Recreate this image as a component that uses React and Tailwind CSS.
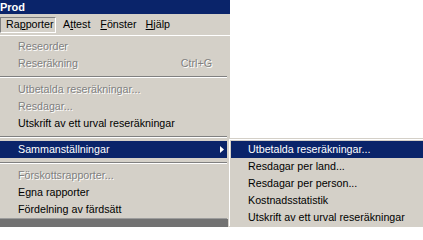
import React from "react";

const mainItems = [
  { label: "Reseorder", disabled: true },
  { label: "Reseräkning", disabled: true, shortcut: "Ctrl+G" },
  { sep: true },
  { label: "Utbetalda reseräkningar...", disabled: true },
  { label: "Resdagar...", disabled: true },
  { label: "Utskrift av ett urval reseräkningar" },
  { sep: true },
  { label: "Sammanställningar", active: true, submenu: true },
  { sep: true },
  { label: "Förskottsrapporter...", disabled: true },
  { label: "Egna rapporter" },
  { label: "Fördelning av färdsätt" },
];

const subItems = [
  { label: "Utbetalda reseräkningar...", active: true },
  { label: "Resdagar per land..." },
  { label: "Resdagar per person..." },
  { label: "Kostnadsstatistik" },
  { label: "Utskrift av ett urval reseräkningar" },
];

function Separator() {
  return (
    <div className="h-[9px] pt-[4px]">
      <div className="h-[2px] border-t border-b border-t-[#808080] border-b-white" />
    </div>
  );
}

function MenuRow({ item, indent }) {
  let cls = "flex h-[17px] items-center justify-between leading-[17px] whitespace-nowrap";
  if (item.active) cls += " bg-[#0a246a] text-white";
  else if (item.disabled) cls += " text-[#808080] [text-shadow:1px_1px_0_#ffffff]";

  return (
    <div className={cls + " " + indent}>
      <span>{item.label}</span>
      {item.shortcut && <span className="pr-[15px]">{item.shortcut}</span>}
      {item.submenu && (
        <svg width="4" height="7" viewBox="0 0 4 7" className="mr-[3px]">
          <polygon points="0,0 4,3.5 0,7" fill="#ffffff" />
        </svg>
      )}
    </div>
  );
}

export default function App() {
  return (
    <div className="relative w-[423px] h-[227px] overflow-hidden bg-white text-black text-[10.7px] font-['Liberation_Sans',Arial,sans-serif]">
      <div className="w-[230px] flex flex-col">
        {/* title bar */}
        <div className="h-[14px] bg-[#0a246a] text-white text-[11px] font-bold leading-[14px] pl-0">
          Prod
        </div>

        {/* menu bar */}
        <div className="h-[21px] bg-[#d4d0c8] flex items-center">
          <div className="h-[16px] w-[56px] flex items-center pl-[5px] border-t border-l border-t-[#808080] border-l-[#808080] border-b border-r border-b-white border-r-white">
            Ra<span className="underline">p</span>porter
          </div>
          <div className="pl-[7px] pr-[5px]">
            A<span className="underline">t</span>test
          </div>
          <div className="px-[5px]">
            <span className="underline">F</span>önster
          </div>
          <div className="px-[4px]">
            <span className="underline">H</span>jälp
          </div>
        </div>

        {/* dropdown */}
        <div className="bg-[#d4d0c8] border-t border-white pt-[2px] pr-[3px]">
          {mainItems.map((item, i) =>
            item.sep ? (
              <Separator key={i} />
            ) : (
              <MenuRow key={i} item={item} indent="pl-[18px]" />
            )
          )}
          <div className="h-px bg-[#9c9c9c]" />
        </div>
        <div className="h-[10px] bg-[#727272]" />
      </div>

      {/* submenu */}
      <div className="absolute left-[228px] top-[138px] w-[210px] h-[100px] bg-[#d4d0c8] border-t border-l border-[#d4d0c8]">
        <div className="border-t border-l border-white pt-px pl-px">
          {subItems.map((item, i) => (
            <MenuRow key={i} item={item} indent="pl-[17px]" />
          ))}
        </div>
      </div>
    </div>
  );
}
